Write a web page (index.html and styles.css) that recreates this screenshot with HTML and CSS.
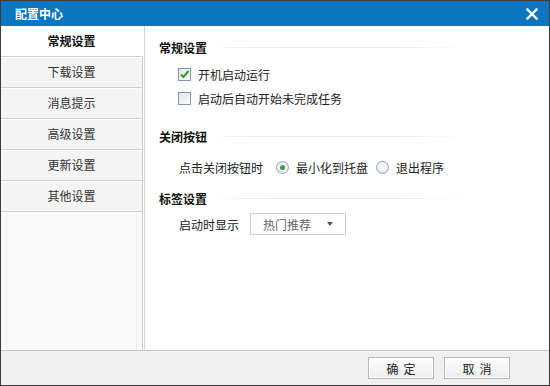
FILE: index.html
```html
<!DOCTYPE html>
<html lang="zh">
<head>
<meta charset="utf-8">
<title>配置中心</title>
<link rel="stylesheet" href="styles.css">
</head>
<body>
<div class="window">
  <div class="titlebar">
    <span class="title">配置中心</span>
    <span class="close" aria-label="关闭">
      <svg width="12" height="12" viewBox="0 0 12 12"><path d="M1.5 1.5 L10.5 10.5 M10.5 1.5 L1.5 10.5" stroke="#fff" stroke-width="2.4" stroke-linecap="square" fill="none"/></svg>
    </span>
  </div>
  <div class="body">
    <ul class="sidebar">
      <li class="nav-item active">常规设置</li>
      <li class="nav-item">下载设置</li>
      <li class="nav-item">消息提示</li>
      <li class="nav-item">高级设置</li>
      <li class="nav-item">更新设置</li>
      <li class="nav-item">其他设置</li>
      <li class="nav-fill"></li>
    </ul>
    <div class="main">
      <div class="heading h1"><span>常规设置</span><i class="rule"></i></div>
      <div class="check-row">
        <span class="checkbox checked">
          <svg width="11" height="11" viewBox="0 0 11 11"><path d="M2 5.5 L4.5 8 L9.5 2" stroke="#2f9a22" stroke-width="2" fill="none"/></svg>
        </span>
        <span>开机启动运行</span>
      </div>
      <div class="check-row">
        <span class="checkbox"></span>
        <span>启动后自动开始未完成任务</span>
      </div>
      <div class="heading h2"><span>关闭按钮</span><i class="rule"></i></div>
      <div class="radio-row">
        <span class="label">点击关闭按钮时</span>
        <span class="radio checked"></span><span class="opt">最小化到托盘</span>
        <span class="radio"></span><span class="opt">退出程序</span>
      </div>
      <div class="heading h3"><span>标签设置</span><i class="rule"></i></div>
      <div class="select-row">
        <span class="label">启动时显示</span>
        <span class="select"><span class="select-text">热门推荐</span><i class="arrow"></i></span>
      </div>
    </div>
  </div>
  <div class="footer">
    <button class="btn"><span class="btn-text">确定</span></button>
    <button class="btn"><span class="btn-text">取消</span></button>
  </div>
</div>
</body>
</html>
```
FILE: styles.css
```css
* { box-sizing: border-box; }
html, body { margin: 0; padding: 0; }
body {
  width: 550px; height: 386px; overflow: hidden;
  font-family: "Noto Sans CJK SC", "Noto Sans", sans-serif;
  font-size: 12px; color: #222; background: #fff;
}
.window {
  width: 550px; height: 386px;
  border: 1px solid #3c3c3c;
  display: flex; flex-direction: column;
  background: #fff;
}
.titlebar {
  height: 25px; flex: none;
  background: #0a76c0;
  display: flex; align-items: center; justify-content: space-between;
  padding: 0 11px 0 14px;
  color: #fff;
}
.title { font-weight: bold; font-size: 12px; line-height: 16px; }
.close { display: flex; width: 12px; height: 12px; }
.body { flex: 1; display: flex; min-height: 0; }
.sidebar {
  list-style: none; margin: 0; padding: 0;
  width: 142px; flex: none;
  display: flex; flex-direction: column;
}
.nav-item {
  height: 31px; line-height: 30px; text-align: center;
  color: #333; background: #f4f4f4;
  border-bottom: 1px solid #d0d0d0;
  border-right: 1px solid #cfcfcf;
  box-shadow: inset 0 1px 0 #fff;
}
.nav-item.active {
  background: #fff; font-weight: bold; color: #111;
  border-right-color: #fff;
}
.nav-fill {
  flex: 1; background: #fafafa;
  border-right: 1px solid #cfcfcf;
  box-shadow: inset 5px 0 0 #fafafa, inset 6px 0 0 #eeeeee, inset -5px 0 0 #fafafa, inset -6px 0 0 #eeeeee;
}
.main {
  flex: 1; padding: 13px 0 0 14px;
  border-left: 1px solid #d6d6d6;
  margin-left: 1px;
}
.heading {
  display: flex; align-items: center; height: 16px;
  font-weight: bold; font-size: 12px; color: #111;
}
.rule {
  display: block; height: 1px; width: 240px; margin-left: 16px;
  background: linear-gradient(90deg, rgba(225,225,225,0.4), #e6e6e6 30%, #e6e6e6 70%, rgba(230,230,230,0));
}
.h2 { margin-top: 18px; }
.h3 { margin-top: 11px; }
.check-row {
  display: flex; align-items: center; height: 24px;
  padding-left: 19px; gap: 7px;
}
.h1 + .check-row { margin-top: 7px; }
.checkbox {
  width: 13px; height: 13px; flex: none;
  border: 1px solid #8495aa;
  background: linear-gradient(135deg, #dfe6ee, #fbfcfd);
  display: flex; align-items: center; justify-content: center;
}
.checkbox svg { display: block; }
.radio-row, .select-row {
  display: flex; align-items: center; height: 24px;
  padding-left: 20px;
}
.radio-row { margin-top: 11px; }
.select-row { margin-top: 6px; }
.radio-row .label { margin-right: 13px; }
.radio {
  width: 13px; height: 13px; flex: none; border-radius: 50%;
  border: 1px solid #93a4b8;
  background: radial-gradient(circle at 50% 40%, #fdfdfd, #dde4ec);
  margin-right: 7px;
  position: relative;
}
.radio.checked::after {
  content: ""; position: absolute; left: 3px; top: 3px;
  width: 5px; height: 5px; border-radius: 50%;
  background: #3ca234;
}
.opt { margin-right: 8px; }
.select-row .label { margin-right: 11px; }
.select {
  width: 96px; height: 22px;
  border: 1px solid #cfcfcf; background: #fff;
  display: flex; align-items: center; justify-content: space-between;
  padding: 0 12px 0 12px; color: #666;
}
.arrow {
  width: 0; height: 0;
  border-left: 3.5px solid transparent; border-right: 3.5px solid transparent;
  border-top: 4px solid #555;
}
.footer {
  height: 35px; flex: none;
  background: #f0f0f0;
  border-top: 1px solid #c9c9c9;
  display: flex; align-items: center; justify-content: flex-end;
  gap: 10px; padding: 0 39px 0 0;
}
.btn {
  width: 66px; height: 22px;
  font-family: inherit; font-size: 12px; color: #222;
  border: 1px solid #b9b9b9;
  background: linear-gradient(#fefefe, #ececec);
  box-shadow: inset 0 0 0 1px #fff;
  padding: 0; margin: 0;
}
.btn-text { letter-spacing: 5px; margin-right: -5px; }
```
